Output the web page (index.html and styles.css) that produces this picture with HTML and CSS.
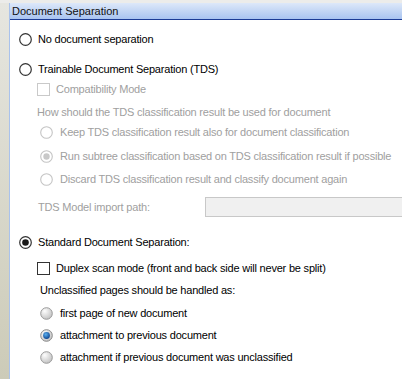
FILE: index.html
```html
<!DOCTYPE html>
<html lang="en">

<head>
  <meta charset="UTF-8">
  <title>Document Separation</title>
  <link rel="stylesheet" href="styles.css">
</head>

<body>
  <div class="side"></div>
  <div class="panel">
    <div class="header">Document Separation</div>

    <div class="row top first">
      <svg class="radio" viewBox="0 0 13 13"><circle cx="6.5" cy="6.5" r="5.8" fill="#fff" stroke="#333" stroke-width="1.2"/></svg>
      <span>No document separation</span>
    </div>
    <div class="row top gap10">
      <svg class="radio" viewBox="0 0 13 13"><circle cx="6.5" cy="6.5" r="5.8" fill="#fff" stroke="#333" stroke-width="1.2"/></svg>
      <span>Trainable Document Separation (TDS)</span>
    </div>

    <div class="group disabled">
      <div class="row check">
        <span class="box off"></span>
        <span>Compatibility Mode</span>
      </div>
      <div class="row label gap3">How should the TDS classification result be used for document</div>
      <div class="row sub">
        <svg class="radio" viewBox="0 0 13 13"><circle cx="6.5" cy="6.5" r="5.8" fill="#fff" stroke="#c4c4c4" stroke-width="1.1"/></svg>
        <span>Keep TDS classification result also for document classification</span>
      </div>
      <div class="row sub gap4">
        <svg class="radio" viewBox="0 0 13 13"><circle cx="6.5" cy="6.5" r="5.8" fill="#fff" stroke="#c4c4c4" stroke-width="1.1"/><circle cx="6.5" cy="6.5" r="3.2" fill="#c8c8c8"/></svg>
        <span>Run subtree classification based on TDS classification result if possible</span>
      </div>
      <div class="row sub gap3">
        <svg class="radio" viewBox="0 0 13 13"><circle cx="6.5" cy="6.5" r="5.8" fill="#fff" stroke="#c4c4c4" stroke-width="1.1"/></svg>
        <span>Discard TDS classification result and classify document again</span>
      </div>
      <div class="row path gap8">
        <span class="path-label">TDS Model import path:</span>
        <span class="path-input"></span>
      </div>
    </div>

    <div class="row top gap15">
      <svg class="radio" viewBox="0 0 13 13"><circle cx="6.5" cy="6.5" r="5.8" fill="#fff" stroke="#333" stroke-width="1.2"/><circle cx="6.5" cy="6.5" r="3.3" fill="#1a1a1a"/></svg>
      <span>Standard Document Separation:</span>
    </div>

    <div class="group">
      <div class="row check gap6">
        <span class="box"></span>
        <span>Duplex scan mode (front and back side will never be split)</span>
      </div>
      <div class="row label dark gap2">Unclassified pages should be handled as:</div>
      <div class="row sub gap3">
        <svg class="radio" viewBox="0 0 13 13"><defs><radialGradient id="xp" cx="0.35" cy="0.3" r="0.8"><stop offset="0" stop-color="#fdfdfd"/><stop offset="1" stop-color="#bdbdbd"/></radialGradient></defs><circle cx="6.5" cy="6.5" r="5.8" fill="url(#xp)" stroke="#9a9a9a" stroke-width="1"/></svg>
        <span>first page of new document</span>
      </div>
      <div class="row sub gap2">
        <svg class="radio" viewBox="0 0 13 13"><defs><radialGradient id="dot" cx="0.4" cy="0.35" r="0.7"><stop offset="0" stop-color="#5ab0f0"/><stop offset="1" stop-color="#0a3f8a"/></radialGradient></defs><circle cx="6.5" cy="6.5" r="5.8" fill="url(#xp)" stroke="#8a8a8a" stroke-width="1"/><circle cx="6.5" cy="6.5" r="3.4" fill="url(#dot)"/></svg>
        <span>attachment to previous document</span>
      </div>
      <div class="row sub gap2">
        <svg class="radio" viewBox="0 0 13 13"><circle cx="6.5" cy="6.5" r="5.8" fill="url(#xp)" stroke="#9a9a9a" stroke-width="1"/></svg>
        <span>attachment if previous document was unclassified</span>
      </div>
    </div>
  </div>
</body>

</html>
```

FILE: styles.css
```css
html,
body {
  margin: 0;
  height: 100%;
}

body {
  display: flex;
  background: #ececea;
  font-family: "Liberation Sans", Arial, sans-serif;
  font-size: 11px;
  letter-spacing: -0.2px;
  color: #000;
  overflow: hidden;
}

.side {
  flex: none;
  width: 9px;
  margin-top: 3px;
  background: linear-gradient(#e6e6e0, #cccbb8);
}

.panel {
  flex: 1;
  min-width: 0;
  overflow: hidden;
  margin-top: 3px;
  background: #fff;
  border-left: 1px solid #a9c2ec;
  display: flex;
  flex-direction: column;
  padding-bottom: 12px;
}

.header {
  height: 16px;
  line-height: 17px;
  padding-left: 2px;
  letter-spacing: 0;
  background: linear-gradient(#dde8f9, #a9c4f0);
  border-bottom: 1px solid #1c3c96;
  color: #111;
}

.row {
  height: 20px;
  display: flex;
  align-items: center;
  white-space: nowrap;
}

.radio {
  width: 13px;
  height: 13px;
  flex: none;
}

.top {
  padding-left: 9px;
}

.top .radio {
  margin-right: 6px;
}

.first {
  margin-top: 9px;
}

.group {
  padding-left: 27px;
  display: flex;
  flex-direction: column;
}

.sub {
  padding-left: 3px;
}

.sub .radio {
  margin-right: 7px;
}

.check .box {
  flex: none;
  width: 11px;
  height: 11px;
  border: 1px solid #333;
  background: #fff;
  margin-right: 6px;
}

.check .box.off {
  border-color: #c9c9c9;
}

.label.dark {
  padding-left: 3px;
}

.disabled {
  color: #a0a0a0;
}

.path {
  justify-content: space-between;
}

.path-label {
  padding-left: 1px;
}

.path-input {
  flex: none;
  width: 207px;
  height: 18px;
  border: 1px solid #c8c8c8;
  background: #f0f0f0;
  margin-right: -12px;
}

.gap2 { margin-top: 2px; }
.gap3 { margin-top: 3px; }
.gap4 { margin-top: 4px; }
.gap6 { margin-top: 6px; }
.gap8 { margin-top: 8px; }
.gap10 { margin-top: 10px; }
.gap15 { margin-top: 15px; }
```
